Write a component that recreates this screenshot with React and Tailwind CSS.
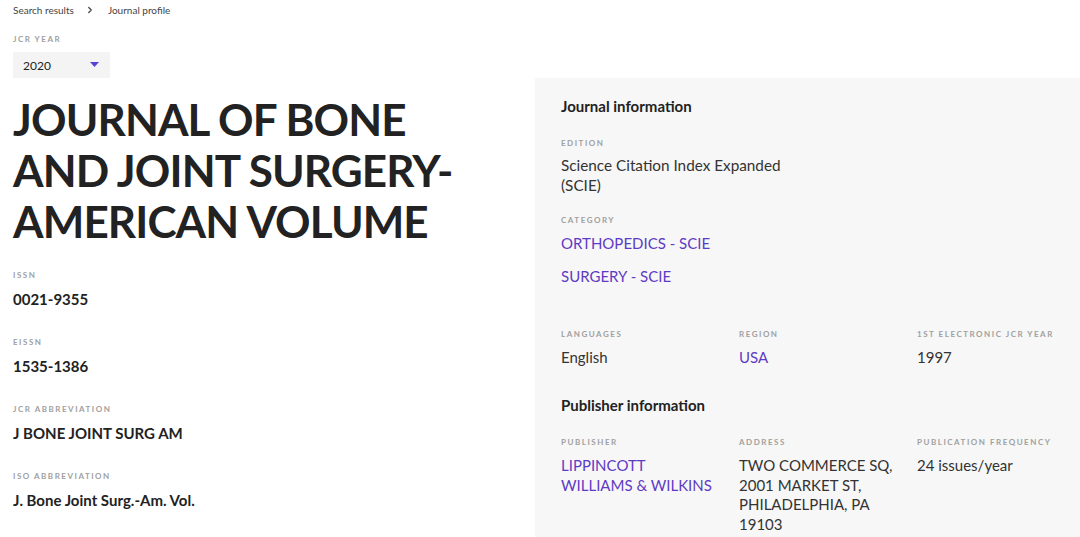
import { ChevronRight } from "lucide-react";

const Label = ({ children, className = "" }) => (
  <p className={`text-[8px] leading-[12px] font-bold tracking-[0.19em] text-[#a0a0a0] uppercase ${className}`}>{children}</p>
);

const leftFields = [
  { label: "ISSN", value: "0021-9355" },
  { label: "EISSN", value: "1535-1386" },
  { label: "JCR Abbreviation", value: "J BONE JOINT SURG AM" },
  { label: "ISO Abbreviation", value: "J. Bone Joint Surg.-Am. Vol." },
];

export default function App() {
  return (
    <div className="min-h-screen flex bg-white text-[#333] font-['Lato',sans-serif]">
      {/* Left column */}
      <div className="w-[535px] shrink-0 pl-[13px] pt-[3px]">
        <div className="flex items-center text-[10px] leading-[14px] text-[#444]">
          <span>Search results</span>
          <ChevronRight className="w-[10px] h-[10px] ml-[11px] mr-[13px]" strokeWidth={3} />
          <span>Journal profile</span>
        </div>

        <Label className="mt-[16px]">JCR Year</Label>
        <div className="mt-[7px] w-[97px] h-[26px] bg-[#f4f4f4] flex items-center justify-between pl-[10px] pr-[11px] pt-[2px]">
          <span className="text-[12px] text-[#222]">2020</span>
          <svg width="9" height="5" viewBox="0 0 9 5" className="-mt-[3px]"><path d="M0 0h9L4.5 5z" fill="#5b3fd6" /></svg>
        </div>

        <h1 className="mt-[16px] text-[44px] leading-[51px] font-bold text-[#222] tracking-[-0.02em]">
          JOURNAL OF BONE<br />AND JOINT SURGERY-<br />AMERICAN VOLUME
        </h1>

        <div className="mt-[22px] flex flex-col gap-[27px]">
          {leftFields.map((f) => (
            <div key={f.label}>
              <Label>{f.label}</Label>
              <p className="mt-[8px] text-[15px] leading-[20px] font-bold text-[#222]">{f.value}</p>
            </div>
          ))}
        </div>
      </div>

      {/* Right panel */}
      <div className="flex-1 mt-[78px] bg-[#f7f7f7] px-[26px] pt-[18px] pb-[20px]">
        <h2 className="text-[15px] leading-[20px] font-bold text-[#222]">Journal information</h2>

        <Label className="mt-[21px]">Edition</Label>
        <p className="mt-[6px] text-[15.3px] leading-[20px]">Science Citation Index Expanded<br />(SCIE)</p>

        <Label className="mt-[19px]">Category</Label>
        <p className="mt-[7px] text-[15px] leading-[20px] text-[#5e3bc4]">ORTHOPEDICS - SCIE</p>
        <p className="mt-[13px] text-[15px] leading-[20px] text-[#5e3bc4]">SURGERY - SCIE</p>

        <div className="mt-[42px] grid grid-cols-[178px_178px_1fr]">
          <div>
            <Label>Languages</Label>
            <p className="mt-[7px] text-[15px] leading-[20px]">English</p>
          </div>
          <div>
            <Label>Region</Label>
            <p className="mt-[7px] text-[15px] leading-[20px] text-[#5e3bc4]">USA</p>
          </div>
          <div>
            <Label>1st Electronic JCR Year</Label>
            <p className="mt-[7px] text-[15px] leading-[20px]">1997</p>
          </div>
        </div>

        <h2 className="mt-[28px] text-[15px] leading-[20px] font-bold text-[#222]">Publisher information</h2>

        <div className="mt-[21px] grid grid-cols-[178px_178px_1fr]">
          <div>
            <Label>Publisher</Label>
            <p className="mt-[8px] text-[15px] leading-[19.5px] text-[#5e3bc4]">LIPPINCOTT<br />WILLIAMS &amp; WILKINS</p>
          </div>
          <div>
            <Label>Address</Label>
            <p className="mt-[8px] text-[15px] leading-[19.5px]">TWO COMMERCE SQ,<br />2001 MARKET ST,<br />PHILADELPHIA, PA<br />19103</p>
          </div>
          <div>
            <Label>Publication Frequency</Label>
            <p className="mt-[8px] text-[15px] leading-[19.5px]">24 issues/year</p>
          </div>
        </div>
      </div>
    </div>
  );
}
